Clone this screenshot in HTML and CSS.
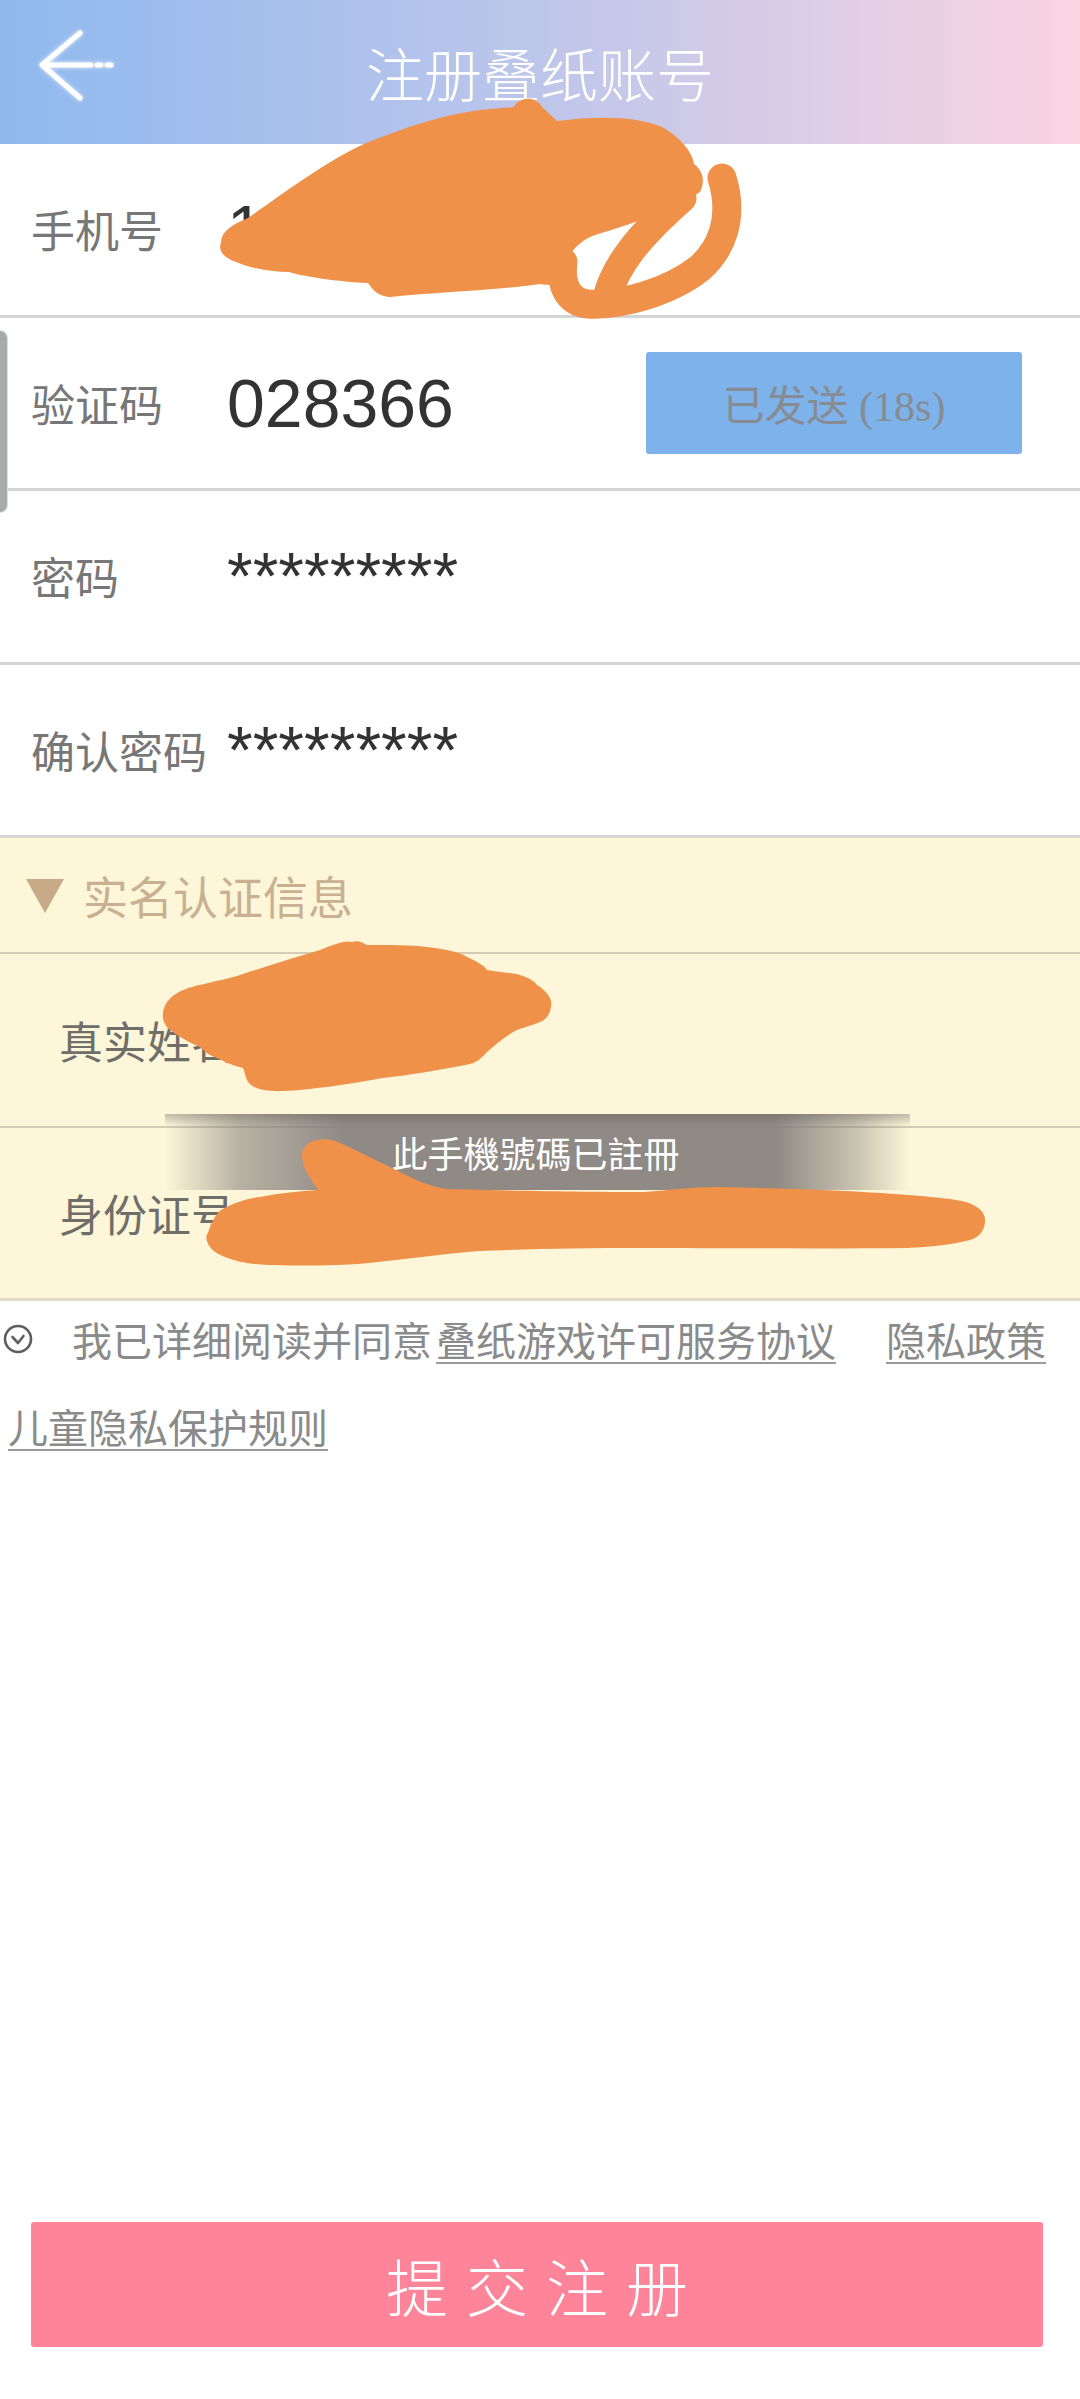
FILE: index.html
```html
<!DOCTYPE html>
<html lang="zh-CN">
<head>
<meta charset="utf-8">
<title>注册叠纸账号</title>
<link rel="stylesheet" href="styles.css">
</head>
<body>
<header class="topbar">
  <svg class="back" width="90" height="90" viewBox="0 0 90 90">
    <g fill="none" stroke="#ffffff" stroke-width="5" stroke-linecap="round" stroke-linejoin="round">
      <polyline points="50,6 12,38 50,71"/>
      <line x1="13" y1="38" x2="61" y2="38"/>
      <line x1="67" y1="38" x2="71" y2="38"/>
      <line x1="77" y1="38" x2="81" y2="38"/>
    </g>
  </svg>
  <h1 class="title">注册叠纸账号</h1>
  <div></div>
</header>

<section class="form">
  <div class="row">
    <span class="label">手机号</span>
    <span class="value">1</span>
  </div>
  <div class="row">
    <span class="label">验证码</span>
    <span class="value code">028366</span>
    <span class="send">已发送 (18s)</span>
  </div>
  <div class="row">
    <span class="label">密码</span>
    <span class="value">*********</span>
  </div>
  <div class="row">
    <span class="label">确认密码</span>
    <span class="value">*********</span>
  </div>
</section>

<section class="realname">
  <div class="rn-head">
    <svg class="tri" width="38" height="36" viewBox="0 0 38 36"><polygon points="0,2 38,2 19,36" fill="#c9aa86"/></svg>
    <span>实名认证信息</span>
  </div>
  <div class="row rn-row">
    <span class="label">真实姓名</span>
  </div>
  <div class="row rn-row">
    <span class="label">身份证号</span>
  </div>
</section>

<section class="agree">
  <div class="agree-line">
    <svg class="check" width="30" height="30" viewBox="0 0 30 30">
      <circle cx="15" cy="15" r="13" fill="none" stroke="#5e5e5e" stroke-width="2.6"/>
      <polyline points="9.5,13 15,19 20.5,12" fill="none" stroke="#5e5e5e" stroke-width="2.6" stroke-linecap="round" stroke-linejoin="round"/>
    </svg>
    <span class="agree-text">我已详细阅读并同意</span>
    <a class="link first">叠纸游戏许可服务协议</a>
    <a class="link second">隐私政策</a>
  </div>
  <div class="agree-line2">
    <a class="link">儿童隐私保护规则</a>
  </div>
</section>

<button class="submit">提交注册</button>

<div class="side-handle"></div>

<div class="toast"><span>此手機號碼已註冊</span></div>

<svg class="scribbles" width="1080" height="2399" viewBox="0 0 1080 2399">
  <g fill="#f0914a">
    <path d="M221,242 C222,230 234,224 248,218 C280,196 324,162 366,143 C406,127 446,114 480,110 L514,107 C518,97 536,95 542,107 L557,121 C600,115 640,117 662,127 C680,137 692,151 694,164 C702,170 706,180 700,192 C680,205 640,222 595,235 C575,242 565,260 560,275 C555,285 548,286 540,284 C500,290 440,292 390,297 C376,296 372,288 368,283 C340,282 300,276 289,272 C270,272 250,268 236,262 C222,257 218,250 221,242 Z"/>
    <path d="M163,1013 C165,995 185,988 200,985 C220,980 235,977 240,975 C270,965 300,956 320,950 C335,944 345,940 352,942 C358,940 363,943 367,945 C390,945 410,945 427,947 C445,949 460,952 467,957 C478,962 485,966 487,970 C500,972 512,973 520,975 C530,978 535,982 537,985 C545,990 553,998 551,1006 C550,1016 545,1020 540,1022 C530,1026 522,1028 517,1030 C505,1036 495,1045 487,1052 C480,1060 475,1063 470,1064 C440,1070 410,1075 383,1078 C350,1084 310,1090 283,1091 C265,1092 250,1088 247,1080 C245,1075 244,1070 243,1068 C230,1065 222,1060 217,1058 C208,1055 203,1050 200,1047 C190,1043 178,1036 170,1030 C164,1025 162,1018 163,1013 Z"/>
    <path d="M309,1143 C318,1138 330,1138 340,1143 C360,1152 375,1160 386,1165 C400,1172 415,1180 424,1183 C432,1186 440,1188 446,1189 C520,1191 600,1192 644,1192 C670,1190 695,1187 715,1187 C770,1188 820,1190 863,1192 C900,1194 940,1197 962,1201 C978,1205 986,1212 985,1222 C984,1232 978,1238 970,1240 C950,1245 930,1247 907,1248 C820,1249 720,1248 644,1248 C580,1248 530,1249 479,1251 C440,1254 400,1260 358,1264 C320,1266 280,1266 254,1264 C235,1262 215,1255 210,1247 C205,1240 206,1235 208,1233 C210,1225 215,1215 221,1210 C235,1202 250,1198 260,1197 C280,1193 300,1191 318,1190 C315,1185 312,1182 310,1178 C305,1170 302,1162 302,1155 C302,1150 305,1146 309,1143 Z"/>
  </g>
  <g fill="none" stroke="#f0914a" stroke-width="29" stroke-linecap="round">
    <path d="M722,178 C735,220 720,250 700,268 C670,292 620,306 588,304 C568,302 560,285 563,262"/>
    <path d="M607,298 C615,265 640,235 682,198"/>
  </g>
</svg>
</body>
</html>
```

FILE: styles.css
```css
html, body {
  margin: 0;
  padding: 0;
}

body {
  width: 1080px;
  min-height: 2399px;
  display: flex;
  flex-direction: column;
  position: relative;
  overflow: hidden;
  background: #ffffff;
  font-family: "Noto Sans CJK SC", "Noto Sans", sans-serif;
}

.topbar {
  height: 144px;
  display: grid;
  grid-template-columns: 1fr auto 1fr;
  align-items: center;
  background: linear-gradient(to right, #8fb9ef 0%, #bdc6ea 50%, #fbd4e2 100%);
}

.back {
  margin-left: 30px;
  filter: drop-shadow(0 0 2px rgba(255, 255, 255, 0.8));
}

.title {
  margin: 0;
  font-size: 58px;
  font-weight: 300;
  color: #ffffff;
  letter-spacing: 0;
  line-height: 1;
}

.form {
  display: flex;
  flex-direction: column;
}

.row {
  height: 173.5px;
  box-sizing: border-box;
  border-bottom: 3px solid #d5d5d5;
  display: flex;
  align-items: center;
  padding-left: 31px;
}

.label {
  width: 196px;
  flex: none;
  font-size: 44px;
  color: #777777;
  font-weight: 400;
}

.value {
  font-family: "Liberation Sans", Arial, sans-serif;
  font-size: 66px;
  color: #333333;
}

.value.code {
  font-size: 68px;
}

.send {
  margin-left: auto;
  margin-right: 58px;
  width: 376px;
  height: 102px;
  border-radius: 3px;
  background: #7db2eb;
  display: flex;
  align-items: center;
  justify-content: center;
  font-family: "Liberation Serif", "Noto Sans CJK SC", serif;
  font-size: 42px;
  color: #878b92;
}

.realname {
  background: #fdf6d9;
  display: flex;
  flex-direction: column;
}

.rn-head {
  height: 116px;
  box-sizing: border-box;
  border-bottom: 2px solid #d4ccb4;
  display: flex;
  align-items: center;
  padding-left: 26px;
  font-size: 45px;
  color: #c9b091;
}

.tri {
  margin-right: 19px;
}

.rn-row {
  padding-left: 59px;
  border-bottom: 2px solid #d4ccb4;
}

.rn-row .label {
  color: #6f6e68;
}

.rn-row:last-child {
  border-bottom: 3px solid #e2dac4;
}

.agree {
  display: flex;
  flex-direction: column;
  font-size: 40px;
  color: #8a8a8a;
}

.agree-line {
  height: 76px;
  display: flex;
  align-items: center;
}

.check {
  margin-left: 3px;
  margin-right: 39px;
  flex: none;
}

.link {
  color: #8a8a8a;
  text-decoration: underline;
  text-decoration-color: #9a9a9a;
  text-decoration-thickness: 2px;
  text-underline-offset: 6px;
}

.link.first {
  margin-left: 4px;
}

.link.second {
  margin-left: 50px;
}

.agree-line2 {
  height: 98px;
  display: flex;
  align-items: center;
  padding-left: 8px;
}

.submit {
  margin: auto 0 52px 31px;
  width: 1012px;
  height: 125px;
  border: none;
  border-radius: 3px;
  background: #fd8499;
  color: #ffffff;
  font-family: "Noto Sans CJK SC", sans-serif;
  font-size: 62px;
  font-weight: 300;
  letter-spacing: 18px;
  padding: 0 0 0 18px;
}

.side-handle {
  position: absolute;
  left: 0;
  top: 330px;
  width: 8px;
  height: 183px;
  box-sizing: border-box;
  background: #a9abab;
  border: 1px solid #cfe6ea;
  border-left: none;
  border-radius: 0 8px 8px 0;
}

.toast {
  position: absolute;
  left: 165px;
  top: 1114px;
  width: 745px;
  height: 76px;
  display: flex;
  align-items: center;
  justify-content: center;
  background:
    linear-gradient(to bottom, rgba(90, 84, 84, 0.35) 0px, rgba(90, 84, 84, 0) 12px),
    linear-gradient(to right, rgba(128, 122, 120, 0) 0%, rgba(128, 122, 120, 0.55) 10%, rgba(132, 126, 124, 0.9) 24%, rgba(132, 126, 124, 0.9) 82%, rgba(128, 122, 120, 0.4) 93%, rgba(128, 122, 120, 0) 100%);
  color: #ffffff;
  font-family: "Noto Sans CJK TC", "Noto Sans CJK SC", sans-serif;
  font-size: 36px;
}

.toast span {
  margin-left: -4px;
}

.scribbles {
  position: absolute;
  left: 0;
  top: 0;
  pointer-events: none;
}
```
